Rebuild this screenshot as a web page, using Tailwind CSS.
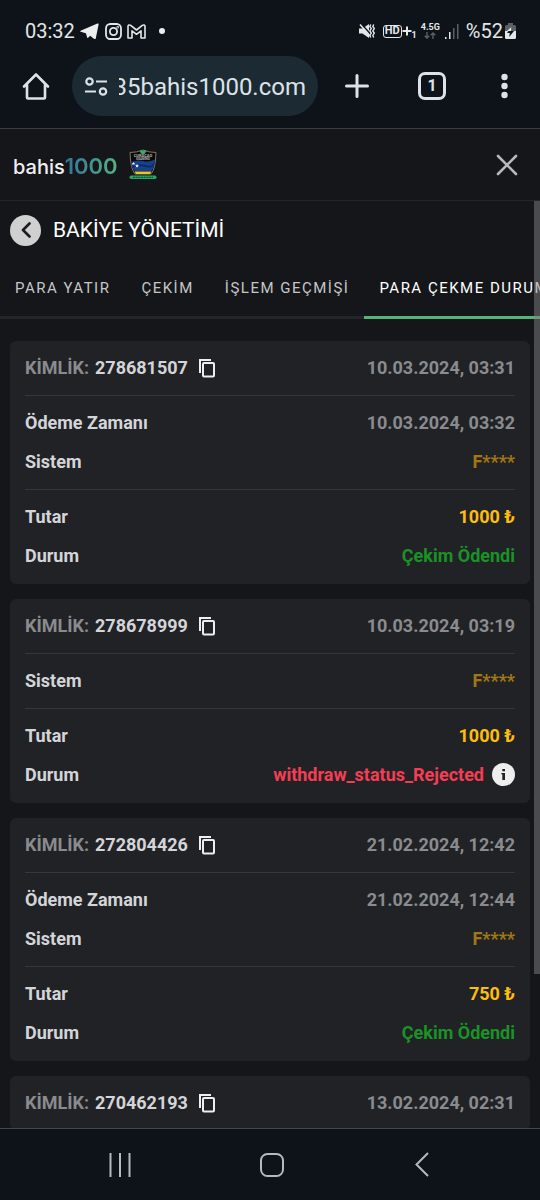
<!DOCTYPE html>
<html lang="tr">
<head>
<meta charset="utf-8">
<meta name="viewport" content="width=device-width, initial-scale=1">
<title>Bakiye Yönetimi</title>
<script src="https://cdn.jsdelivr.net/npm/@tailwindcss/browser@4"></script>
</head>
<body class="bg-[#0d1318] font-['Roboto',sans-serif] text-[#d4d5d8]">
<svg class="hidden" aria-hidden="true">
  <symbol id="copy" viewBox="0 0 18 20"><path d="M2 15V2h11" fill="none" stroke="currentColor" stroke-width="2"/><rect x="5" y="5" width="11" height="13.5" rx="1" fill="none" stroke="currentColor" stroke-width="2"/></symbol>
</svg>
<div class="flex h-screen flex-col overflow-hidden">

  <!-- Status bar -->
  <div class="flex h-14 shrink-0 items-center justify-between pt-1.5 pl-[25px] pr-6 text-[#e4e6e8]">
    <div class="flex items-center">
      <span class="text-[20px] leading-6">03:32</span>
      <svg class="ml-[5px] h-[17px] w-[19px]" viewBox="0 0 19 17" fill="#eceded"><path d="M.6 7.800 17.400.6c.8-.3 1.400.1 1.200 1L15.800 15.200c-.2.9-.8 1.100-1.500.7l-4.200-3.200-2 2c-.4.4-.8.3-.9-.3L5.900 10.300.7 8.700c-.7-.2-.7-.6-.1-.9ZM6.800 10l8.600-6.200-7 7.200-.3 2.400Z"/></svg>
      <svg class="ml-[6px] size-[17px]" viewBox="0 0 17 17" fill="none" stroke="#e4e6e8" stroke-width="1.800"><rect x="1" y="1" width="15" height="15" rx="4.300"/><circle cx="8.500" cy="8.500" r="3.600"/><circle cx="12.700" cy="4.300" r=".4"/></svg>
      <svg class="ml-[5px] h-[15px] w-[19px]" viewBox="0 0 19 15" fill="none" stroke="#e4e6e8" stroke-width="1.600" stroke-linejoin="round"><path d="M1 2.500C1 1 2.500.6 3.700 1.400L9.500 6l5.800-4.600C16.500.6 18 1 18 2.500V14h-4V6.800L9.500 10.300 5 6.800V14H1Z"/></svg>
      <span class="ml-[13px] size-[6px] rounded-full bg-[#eceded]"></span>
    </div>
    <div class="flex items-center">
      <svg class="h-4 w-[16px]" viewBox="0 0 16 16" fill="#e4e6e8"><path d="M0 5.500h3.500L10 1v14l-6.500-4.500H0Z"/><path d="M1.500 0 11.500 11" stroke="#0d1318" stroke-width="1.500"/><path d="M1 1.500 11 13" stroke="#e4e6e8" stroke-width="1.500"/><path d="M11.800 1.500l-1 2 1.500 2-1.500 2.500 1.500 2-1.500 2.500 1 2M14.800 1.500l-1 2 1.500 2-1.500 2.500 1.500 2-1.500 2.500 1 2" fill="none" stroke="#e4e6e8" stroke-width="1.400"/></svg>
      <div class="ml-2 flex items-center">
        <span class="flex h-[13px] items-center rounded-[3px] border-[1.5px] border-[#e4e6e8] px-px text-[11px] leading-[10px] font-bold">HD</span>
        <svg class="h-[10px] w-[10px]" viewBox="0 0 10 10" stroke="#e4e6e8" stroke-width="2"><path d="M5 .5v9M.5 5h9"/></svg>
        <span class="pt-2 text-[9px] leading-2 font-bold">1</span>
      </div>
      <div class="ml-[4px] flex flex-col items-center">
        <span class="text-[9px] leading-[9px] font-bold">4.5G</span>
        <svg class="h-[7px] w-3" viewBox="0 0 12 7" fill="none" stroke="#5b6065" stroke-width="1.400"><path d="M3 0v6M.7 3.800 3 6l2.300-2.200M9 7V1M6.700 3.200 9 1l2.300 2.200"/></svg>
      </div>
      <svg class="ml-[5px] h-[15px] w-[14px]" viewBox="0 0 14 15"><path d="M0 13h1.500v2H0ZM4 8h1.500v7H4Z" fill="#e4e6e8"/><path d="M8 4h1.500v11H8ZM12 0h1.500v15H12Z" fill="#5b6065"/></svg>
      <span class="ml-[7px] text-[20px] leading-6">%52</span>
      <svg class="ml-[2px] h-[16px] w-[11px]" viewBox="0 0 11 16"><path d="M3 0h5v2h1.500Q11 2 11 3.500V8H0V3.500Q0 2 1.500 2H3Z" fill="#5b6065"/><path d="M0 8h11v6.500Q11 16 9.500 16h-8Q0 16 0 14.500Z" fill="#e4e6e8"/><path d="M6.500 4v4H0" fill="none"/><path d="M6.500 4 2 10h2.800L4.200 14 9 8H6Z" fill="#0d1318"/><path d="M6.500 4 2 8h4Z" fill="#e4e6e8"/></svg>
    </div>
  </div>

  <!-- Browser toolbar -->
  <div class="flex h-[73px] shrink-0 items-start border-b border-[#3a3e43] pl-[22px] pr-[29px] text-[#dce3e7]">
    <button class="flex h-[60px] w-7 items-center justify-center" aria-label="Ana sayfa"><svg class="size-7" viewBox="0 0 28 28" fill="none" stroke="currentColor" stroke-width="2.600" stroke-linejoin="round" stroke-linecap="round"><path d="M2 14.500 14 2.500l12 12M5 12.500V25.500q0 1 1 1h16q1 0 1-1V12.500"/></svg></button>
    <div class="ml-[22px] flex h-[60px] min-w-0 flex-1 items-center rounded-full bg-[#1c2a33] pl-[13px] pr-3">
      <svg class="h-[19px] w-[23px] shrink-0" viewBox="0 0 23 19" fill="none" stroke="currentColor" stroke-width="2.200"><circle cx="4.500" cy="4.500" r="3.200"/><path d="M11 4.500h11M0 14.500h11"/><circle cx="18" cy="14.500" r="3.200"/></svg>
      <div class="ml-[11px] flex min-w-0 flex-1 justify-end overflow-hidden pt-px">
        <input aria-label="Adres" value="35bahis1000.com" class="w-[220px] shrink-0 bg-transparent text-right text-[24px] leading-8 outline-none">
      </div>
    </div>
    <button class="ml-[26px] flex h-[60px] w-[26px] items-center justify-center" aria-label="Yeni sekme"><svg class="size-6" viewBox="0 0 24 24" stroke="currentColor" stroke-width="3" stroke-linecap="round"><path d="M12 1.500v21M1.500 12h21"/></svg></button>
    <button class="ml-12 flex h-[60px] w-7 items-center justify-center" aria-label="Sekmeler"><span class="flex size-7 items-center justify-center rounded-[7px] border-[3px] border-current text-[16px] leading-5 font-bold">1</span></button>
    <button class="ml-[51px] flex h-[60px] w-[14px] items-center justify-center" aria-label="Menü"><svg class="h-[26px] w-[7px]" viewBox="0 0 7 26" fill="currentColor"><circle cx="3.500" cy="4" r="3.200"/><circle cx="3.500" cy="13" r="3.200"/><circle cx="3.500" cy="22" r="3.200"/></svg></button>
  </div>

  <!-- Page -->
  <div class="flex min-h-0 flex-1 flex-col bg-[#15161a]">
    <header class="flex h-[72px] shrink-0 items-center justify-between border-b border-[#25262a] pl-[13px] pr-[22px]">
      <a href="#" class="flex items-center">
        <span class="flex items-baseline pt-1 font-['Inter',sans-serif]"><span class="text-[20px] leading-7 font-medium text-[#f0f0f1]">bahis</span><span class="bg-linear-to-r from-[#36729b] to-[#57b27f] bg-clip-text text-[22px] leading-7 font-semibold text-transparent">1000</span></span>
        <svg class="ml-[10px] h-[32px] w-[30px]" viewBox="0 0 30 32" role="img" aria-label="Curaçao eGaming">
          <path d="M2 3.500Q9 3.500 15 1q6 2.500 13 2.500Q27.500 20 23 25H7Q2.500 20 2 3.500Z" fill="#08090b" stroke="#82775d" stroke-width="1"/>
          <path d="M3.200 13Q9 10.500 15 12t12-1.500Q26 19 23.500 22H6.500Q3.800 19 3.200 13Z" fill="#173f8e"/>
          <path d="M4 18q8-3 14-1t8-2" fill="none" stroke="#0b2866" stroke-width="1.500"/>
          <path d="M6.500 22.500h17L22 25H8Z" fill="#e6c927"/>
          <path d="m5.500 13 .5 1 1.100.1-.8.7.2 1.100-1-.6-1 .6.2-1.100-.8-.7 1.100-.1ZM9 15l.6 1.200 1.300.1-1 .9.300 1.300-1.200-.7-1.200.7.3-1.300-1-.9 1.300-.1Z" fill="#fff"/>
          <path d="M11.500 1.500h7L17 4.500l-2 1-2-1Z" fill="#43a968"/>
          <text x="15" y="8" text-anchor="middle" font-size="4" font-weight="700" fill="#b8b8b8">CURAÇAO</text>
          <text x="15" y="11" text-anchor="middle" font-size="3" font-weight="700" fill="#b8b8b8">EGAMING</text>
          <rect x="1.500" y="26.500" width="27" height="3.500" rx="1.700" fill="#26a765"/>
          <path d="M5 28.300h20" stroke="#0c5732" stroke-width="1.200" stroke-dasharray="2 .7"/>
        </svg>
      </a>
      <button aria-label="Kapat" class="text-[#b7b8ba]"><svg class="size-[22px]" viewBox="0 0 22 22" stroke="currentColor" stroke-width="2.600" stroke-linecap="round"><path d="M2 2l18 18M20 2 2 20"/></svg></button>
    </header>

    <main class="relative min-h-0 flex-1 overflow-hidden">
      <div class="flex h-[58px] items-center pl-[10px]">
        <button aria-label="Geri" class="flex size-[31px] items-center justify-center rounded-full bg-[#d0d0d1]"><svg class="h-[16px] w-[10px]" viewBox="0 0 10 16" fill="none" stroke="#1b1c20" stroke-width="2.600" stroke-linecap="round" stroke-linejoin="round"><path d="M8.500 1.500 2 8l6.500 6.500"/></svg></button>
        <h1 class="ml-3 text-[21px] leading-7 text-white">BAKİYE YÖNETİMİ</h1>
      </div>

      <div role="tablist" class="flex h-[60px] overflow-hidden text-[15px] leading-5 tracking-widest whitespace-nowrap text-[#c5c6c8]">
        <button role="tab" class="shrink-0 border-b-[3px] border-[#232428] px-[15px]">PARA YATIR</button>
        <button role="tab" class="shrink-0 border-b-[3px] border-[#232428] px-4">ÇEKİM</button>
        <button role="tab" class="shrink-0 border-b-[3px] border-[#232428] px-[15px]">İŞLEM GEÇMİŞİ</button>
        <button role="tab" aria-selected="true" class="shrink-0 border-b-[3px] border-[#55b374] px-[15px] text-white">PARA ÇEKME DURUMU</button>
      </div>

      <div class="flex flex-col gap-[15px] px-[10px] pt-[22px] text-[18px] leading-6 font-bold">
        <article class="rounded-md bg-[#212226] px-[15px]">
          <div class="flex h-[54px] items-center justify-between text-[#8a8b8e]">
            <div class="flex items-center"><span>KİMLİK:</span><span class="ml-1.5 text-[#d4d5d8]">278681507</span><button aria-label="Kopyala" class="ml-[10px] text-[#eeeeef]"><svg class="h-5 w-[18px]"><use href="#copy"/></svg></button></div>
            <time>10.03.2024, 03:31</time>
          </div>
          <dl class="border-t border-[#36373b] pt-[7px] pb-2">
            <div class="flex h-[39px] items-center justify-between"><dt>Ödeme Zamanı</dt><dd class="text-[#8a8b8e]">10.03.2024, 03:32</dd></div>
            <div class="flex h-[39px] items-center justify-between"><dt>Sistem</dt><dd class="text-[#a17812]">F****</dd></div>
          </dl>
          <dl class="border-t border-[#36373b] pt-[7px] pb-[9px]">
            <div class="flex h-[39px] items-center justify-between"><dt>Tutar</dt><dd class="text-[#fdbd0d]">1000 ₺</dd></div>
            <div class="flex h-[39px] items-center justify-between"><dt>Durum</dt><dd class="text-[#199325]">Çekim Ödendi</dd></div>
          </dl>
        </article>

        <article class="rounded-md bg-[#212226] px-[15px]">
          <div class="flex h-[54px] items-center justify-between text-[#8a8b8e]">
            <div class="flex items-center"><span>KİMLİK:</span><span class="ml-1.5 text-[#d4d5d8]">278678999</span><button aria-label="Kopyala" class="ml-[10px] text-[#eeeeef]"><svg class="h-5 w-[18px]"><use href="#copy"/></svg></button></div>
            <time>10.03.2024, 03:19</time>
          </div>
          <dl class="border-t border-[#36373b] pt-[7px] pb-2">
            <div class="flex h-[39px] items-center justify-between"><dt>Sistem</dt><dd class="text-[#a17812]">F****</dd></div>
          </dl>
          <dl class="border-t border-[#36373b] pt-[7px] pb-[9px]">
            <div class="flex h-[39px] items-center justify-between"><dt>Tutar</dt><dd class="text-[#fdbd0d]">1000 ₺</dd></div>
            <div class="flex h-[39px] items-center justify-between"><dt>Durum</dt><dd class="flex items-center gap-2 text-[#f53d54]">withdraw_status_Rejected<button aria-label="Bilgi"><svg class="size-[23px]" viewBox="0 0 23 23"><circle cx="11.500" cy="11.500" r="11.500" fill="#eeeeef"/><path d="M10.300 6h2.700v2.200h-2.700ZM9.300 10H13v7h-2.700v-5.700h-1Z" fill="#212226"/></svg></button></dd></div>
          </dl>
        </article>

        <article class="rounded-md bg-[#212226] px-[15px]">
          <div class="flex h-[54px] items-center justify-between text-[#8a8b8e]">
            <div class="flex items-center"><span>KİMLİK:</span><span class="ml-1.5 text-[#d4d5d8]">272804426</span><button aria-label="Kopyala" class="ml-[10px] text-[#eeeeef]"><svg class="h-5 w-[18px]"><use href="#copy"/></svg></button></div>
            <time>21.02.2024, 12:42</time>
          </div>
          <dl class="border-t border-[#36373b] pt-[7px] pb-2">
            <div class="flex h-[39px] items-center justify-between"><dt>Ödeme Zamanı</dt><dd class="text-[#8a8b8e]">21.02.2024, 12:44</dd></div>
            <div class="flex h-[39px] items-center justify-between"><dt>Sistem</dt><dd class="text-[#a17812]">F****</dd></div>
          </dl>
          <dl class="border-t border-[#36373b] pt-[7px] pb-[9px]">
            <div class="flex h-[39px] items-center justify-between"><dt>Tutar</dt><dd class="text-[#fdbd0d]">750 ₺</dd></div>
            <div class="flex h-[39px] items-center justify-between"><dt>Durum</dt><dd class="text-[#199325]">Çekim Ödendi</dd></div>
          </dl>
        </article>

        <article class="rounded-md bg-[#212226] px-[15px]">
          <div class="flex h-[54px] items-center justify-between text-[#8a8b8e]">
            <div class="flex items-center"><span>KİMLİK:</span><span class="ml-1.5 text-[#d4d5d8]">270462193</span><button aria-label="Kopyala" class="ml-[10px] text-[#eeeeef]"><svg class="h-5 w-[18px]"><use href="#copy"/></svg></button></div>
            <time>13.02.2024, 02:31</time>
          </div>
        </article>
      </div>

      <!-- Scroll thumb -->
      <div class="absolute top-0 right-0 h-5/6 w-1.5 bg-[#808080]/50"></div>
    </main>
  </div>

  <!-- System navigation -->
  <nav class="flex h-[72px] shrink-0 items-center justify-between border-t border-[#45484c] px-[106px] text-[#b5babd]">
    <button aria-label="Son uygulamalar" class="flex w-7 justify-center"><svg class="h-6 w-[22px]" viewBox="0 0 22 24" stroke="currentColor" stroke-width="2"><path d="M1.500 0v24M11 0v24M20.500 0v24"/></svg></button>
    <button aria-label="Ana ekran" class="flex w-7 justify-center"><svg class="size-6" viewBox="0 0 24 24" fill="none" stroke="currentColor" stroke-width="2"><rect x="1" y="1" width="22" height="22" rx="6.500"/></svg></button>
    <button aria-label="Geri dön" class="flex w-6 justify-center"><svg class="h-[25px] w-[14px]" viewBox="0 0 14 25" fill="none" stroke="currentColor" stroke-width="2"><path d="M13 1 1.500 12.500 13 24"/></svg></button>
  </nav>
</div>
</body>
</html>
